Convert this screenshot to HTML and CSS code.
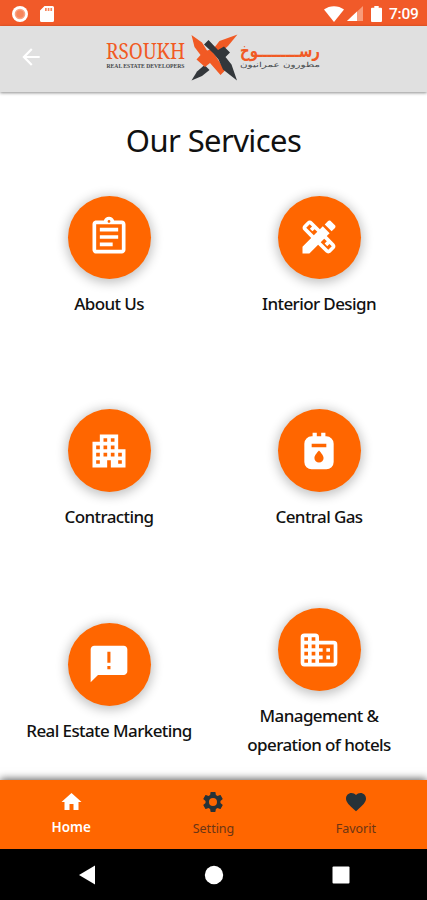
FILE: index.html
```html
<!DOCTYPE html>
<html lang="en">
<head>
  <meta charset="UTF-8" />
  <title>Our Services</title>
  <meta name="viewport" content="width=device-width, initial-scale=1.0" />
  <link rel="stylesheet" href="styles.css">
</head>
<body>

  <!-- Status bar -->
  <div class="status-bar">
    <svg class="status-record" width="16" height="16" viewBox="0 0 16 16">
      <circle cx="8" cy="8" r="8" fill="#fff"/>
      <circle cx="8" cy="8" r="5.3" fill="#f9a384"/>
      <circle cx="8" cy="8" r="3.8" fill="#f7855b"/>
    </svg>
    <svg class="status-card" width="14" height="16" viewBox="0 0 14 16">
      <path fill="#fff" d="M4.500 0H12.500a1.500 1.500 0 0 1 1.500 1.500v13a1.500 1.500 0 0 1-1.500 1.500h-11A1.500 1.500 0 0 1 0 14.500V4.500z"/>
      <path fill="#f7855b" d="M5 2h1.700v3H5zM7.700 2h1.700v3H7.700zM10.400 2h1.700v3h-1.700z"/>
    </svg>
    <svg class="status-wifi" width="20" height="16" viewBox="0 0 20 16">
      <path fill="#fff" d="M0 3.500C5.500-1 14.500-1 20 3.500L10 16z"/>
    </svg>
    <svg class="status-signal" width="16" height="15" viewBox="0 0 16 15">
      <path fill="#f89b7a" d="M16 0v15H0z"/>
      <path fill="#fff" d="M10 5.600V15H0z"/>
    </svg>
    <svg class="status-battery" width="11" height="16" viewBox="0 0 11 16">
      <path fill="#fff" d="M3.300 0h4.400v1.700H10a1 1 0 0 1 1 1V15a1 1 0 0 1-1 1H1a1 1 0 0 1-1-1V2.700a1 1 0 0 1 1-1h2.300z"/>
    </svg>
    <span class="status-time">7:09</span>
  </div>

  <!-- Header -->
  <header class="app-bar">
    <svg class="back" width="26" height="26" viewBox="0 0 24 24">
      <path fill="#fff" d="M20 11H7.830l5.590-5.590L12 4l-8 8 8 8 1.410-1.410L7.830 13H20z"/>
    </svg>
    <svg class="logo" width="220" height="50" viewBox="0 0 220 50">
      <text class="logo-name" x="1" y="26" textLength="79" lengthAdjust="spacingAndGlyphs">RSOUKH</text>
      <text class="logo-sub" x="1.500" y="35" textLength="78" lengthAdjust="spacingAndGlyphs">REAL ESTATE DEVELOPERS</text>
      <path fill="#33373b" d="M86.500 47.500L92 38.500l7.500-6.500 5 5L97 43z"/>
      <path fill="#f15a24" d="M132.500 1.500L123 13l-8 7-6-5 5.500-7z"/>
      <path fill="#f15a24" d="M86.500 2L97 9.500l5 8 4-1 5 7 9 14-4.500 4.500L105 30l-5 4-8.500-7.500 4-4.500-6-8z"/>
      <path fill="#33373b" d="M99 11.500l4.500-4.500 9.500 10 6-3.500 6 6-4.500 4.500 6 7.500 5.500 16-14-11-4.500-10-5-6-1-1z"/>
      <text class="logo-arabic" direction="rtl" x="215" y="23.500" textLength="80" lengthAdjust="spacingAndGlyphs">رســـــــــوخ</text>
      <text class="logo-arabic-sub" direction="rtl" x="215" y="34" textLength="80" lengthAdjust="spacingAndGlyphs">مطورون عمرانيون</text>
    </svg>
  </header>

  <!-- Services -->
  <main class="content">
    <h1 class="title">Our Services</h1>
    <div class="services">
      <div class="service">
        <div class="circle">
          <svg viewBox="0 0 24 24"><path d="M7 15h7v2H7zm0-4h10v2H7zm0-4h10v2H7zm12-4h-4.180C14.400 1.840 13.300 1 12 1c-1.300 0-2.400.84-2.820 2H5c-.14 0-.27.01-.4.04-.39.08-.74.28-1.010.55-.18.18-.33.4-.43.64-.1.23-.16.49-.16.77v14c0 .27.06.54.16.78s.25.45.43.64c.27.27.62.47 1.010.55.13.02.26.03.4.03h14c1.100 0 2-.9 2-2V5c0-1.100-.9-2-2-2zm-7-.25c.41 0 .75.34.75.75s-.34.75-.75.75-.75-.34-.75-.75.34-.75.75-.75zM19 19H5V5h14v14z"/></svg>
        </div>
        <p class="label">About Us</p>
      </div>
      <div class="service">
        <div class="circle">
          <svg viewBox="0 0 24 24"><path d="M16.240 11.510l1.570-1.570-3.750-3.750-1.570 1.570L8.350 3.630c-.78-.78-2.050-.78-2.830 0l-1.900 1.900c-.78.78-.78 2.050 0 2.830l4.130 4.130L3 17.250V21h3.750l4.760-4.760 4.130 4.130c.95.95 2.230.6 2.830 0l1.900-1.900c.78-.78.78-2.050 0-2.830l-4.130-4.130zm-7.060-.44L5.040 6.940l1.890-1.900L8.200 6.310 7.020 7.500l1.410 1.410 1.190-1.190 1.450 1.450-1.890 1.900zm7.880 7.890l-4.130-4.130 1.900-1.900 1.450 1.450-1.190 1.190 1.410 1.410 1.190-1.190 1.270 1.270-1.900 1.900zM20.710 7.040c.39-.39.39-1.020 0-1.410l-2.340-2.340c-.47-.47-1.120-.29-1.410 0l-1.830 1.830 3.750 3.750 1.830-1.830z"/></svg>
        </div>
        <p class="label">Interior Design</p>
      </div>
      <div class="service">
        <div class="circle">
          <svg viewBox="0 0 24 24"><path d="M17 11V3H7v4H3v14h8v-4h2v4h8V11h-4zM7 19H5v-2h2v2zm0-4H5v-2h2v2zm0-4H5V9h2v2zm4 4H9v-2h2v2zm0-4H9V9h2v2zm0-4H9V5h2v2zm4 8h-2v-2h2v2zm0-4h-2V9h2v2zm0-4h-2V5h2v2zm4 12h-2v-2h2v2zm0-4h-2v-2h2v2z"/></svg>
        </div>
        <p class="label">Contracting</p>
      </div>
      <div class="service">
        <div class="circle">
          <svg viewBox="0 0 24 24"><path fill-rule="evenodd" d="M8.500 2h2.300v2h2.400V2h2.300v2H16a4 4 0 0 1 4 4v10a4 4 0 0 1-4 4H8a4 4 0 0 1-4-4V8a4 4 0 0 1 4-4h.5zM8 8v2h8V8zM12 11.700s-2.500 2.500-2.500 4.100a2.500 2.500 0 0 0 5 0c0-1.600-2.500-4.100-2.500-4.100z"/></svg>
        </div>
        <p class="label">Central Gas</p>
      </div>
      <div class="service">
        <div class="circle">
          <svg viewBox="0 0 24 24"><path fill-rule="evenodd" d="M20 2H4c-1.100 0-1.990.9-1.990 2L2 22l4-4h14c1.100 0 2-.9 2-2V4c0-1.100-.9-2-2-2zM12.800 14.800h-1.700v-1.700h1.700zM12.800 11.300h-1.700V5.300h1.700z"/></svg>
        </div>
        <p class="label">Real Estate Marketing</p>
      </div>
      <div class="service">
        <div class="circle">
          <svg viewBox="0 0 24 24"><path fill-rule="evenodd" d="M4 3h6a2 2 0 0 1 2 2v2h8a2 2 0 0 1 2 2v10a2 2 0 0 1-2 2H4a2 2 0 0 1-2-2V5a2 2 0 0 1 2-2zM4 5v2h2V5zM4 9v2h2V9zM4 13v2h2v-2zM4 17v2h2v-2zM8 5v2h2V5zM8 9v2h2V9zM8 13v2h2v-2zM8 17v2h2v-2zM12 9v2h2v2h-2v2h2v2h-2v2h8V9zM16 11h2v2h-2zM16 15h2v2h-2z"/></svg>
        </div>
        <p class="label">Management &amp;<br>operation of hotels</p>
      </div>
    </div>
  </main>

  <!-- Bottom tabs -->
  <nav class="tabs">
    <div class="tab active">
      <svg viewBox="0 0 24 24"><path d="M10 20v-6h4v6h5v-8h3L12 3 2 12h3v8z"/></svg>
      <span>Home</span>
    </div>
    <div class="tab">
      <svg viewBox="0 0 24 24"><path d="M19.430 12.980c.04-.32.07-.64.07-.98s-.03-.66-.07-.98l2.110-1.650c.19-.15.24-.42.12-.64l-2-3.460c-.12-.22-.39-.3-.61-.22l-2.490 1c-.52-.4-1.080-.73-1.690-.98l-.38-2.650C14.460 2.180 14.250 2 14 2h-4c-.25 0-.46.18-.49.42l-.38 2.650c-.61.25-1.170.59-1.690.98l-2.490-1c-.23-.09-.49 0-.61.22l-2 3.460c-.13.22-.07.49.12.64l2.110 1.650c-.04.32-.07.65-.07.98s.03.66.07.98l-2.110 1.650c-.19.15-.24.42-.12.64l2 3.460c.12.22.39.3.61.22l2.490-1c.52.4 1.080.73 1.690.98l.38 2.650c.03.24.24.42.49.42h4c.25 0 .46-.18.49-.42l.38-2.650c.61-.25 1.170-.59 1.690-.98l2.490 1c.23.09.49 0 .61-.22l2-3.460c.12-.22.07-.49-.12-.64l-2.110-1.650zM12 16a4 4 0 1 1 0-8 4 4 0 0 1 0 8z"/></svg>
      <span>Setting</span>
    </div>
    <div class="tab">
      <svg viewBox="0 0 24 24"><path d="M12 21.350l-1.450-1.320C5.400 15.360 2 12.280 2 8.500 2 5.420 4.420 3 7.500 3c1.740 0 3.410.81 4.500 2.090C13.090 3.810 14.760 3 16.500 3 19.580 3 22 5.420 22 8.500c0 3.780-3.400 6.860-8.550 11.540L12 21.350z"/></svg>
      <span>Favorit</span>
    </div>
  </nav>

  <!-- System buttons -->
  <div class="system-nav">
    <svg width="24" height="24" viewBox="0 0 24 24"><path fill="#fff" d="M20 2.500v19L4 12z"/></svg>
    <svg width="24" height="24" viewBox="0 0 24 24"><circle fill="#fff" cx="12" cy="12" r="9.200"/></svg>
    <svg width="24" height="24" viewBox="0 0 24 24"><rect fill="#fff" x="3.500" y="3.500" width="17" height="17" rx="1"/></svg>
  </div>

</body>
</html>
```
FILE: styles.css
```css
* {
  box-sizing: border-box;
}

body {
  margin: 0;
  height: 900px;
  display: flex;
  flex-direction: column;
  overflow: hidden;
  background: #fff;
  color: #111;
  font-family: "Noto Sans", "Open Sans", sans-serif;
}

svg {
  display: block;
  flex: none;
}

.status-bar {
  flex: none;
  height: 26px;
  padding: 1px 8px 0 12px;
  display: flex;
  align-items: center;
  background: #f15a29;
}
.status-card { margin-left: 12px; }
.status-wifi { margin-left: auto; }
.status-signal { margin-left: 3px; }
.status-battery { margin-left: 8px; }
.status-time {
  margin-left: 7px;
  width: 30px;
  font: 500 15.5px/24px Roboto, sans-serif;
  letter-spacing: -0.2px;
  white-space: nowrap;
  color: #fff;
}

.app-bar {
  flex: none;
  position: relative;
  z-index: 1;
  height: 66px;
  padding-left: 18px;
  display: flex;
  align-items: center;
  background: #e0e0e0;
  box-shadow: 0 1px 3px rgba(0, 0, 0, 0.45);
}
.back { margin-bottom: 4px; }
.logo {
  margin-left: 61px;
  margin-bottom: 2px;
  overflow: visible;
}
.logo-name {
  font: 22px "Noto Serif", "Liberation Serif", serif;
  fill: #f15a24;
}
.logo-sub {
  font: bold 6.5px "Liberation Serif", serif;
  fill: #44484b;
}
.logo-arabic {
  font: bold 18px "DejaVu Sans", sans-serif;
  fill: #f15a24;
}
.logo-arabic-sub {
  font: 7px "DejaVu Sans", sans-serif;
  fill: #44484b;
}

.content {
  flex: 1;
  min-height: 0;
  overflow: hidden;
}
.title {
  margin: 0;
  padding-top: 27px;
  height: 58px;
  font-size: 31px;
  font-weight: 400;
  line-height: 42px;
  letter-spacing: -0.6px;
  text-align: center;
}

.services {
  display: grid;
  grid-template-columns: 1fr 1fr;
  grid-auto-rows: 213.5px;
  padding: 0 3px 0 4px;
}
.service {
  display: flex;
  flex-direction: column;
  justify-content: center;
  align-items: center;
}
.circle {
  width: 83px;
  height: 83px;
  border-radius: 50%;
  display: flex;
  justify-content: center;
  align-items: center;
  background: #ff6600;
  box-shadow: 0 2px 11px 2px rgba(0, 0, 0, 0.24);
}
.circle svg {
  width: 44px;
  height: 44px;
  fill: #fff;
}
.label {
  margin: 10px 0 0;
  font-size: 17px;
  font-weight: 500;
  line-height: 29px;
  letter-spacing: -0.6px;
  text-align: center;
  white-space: nowrap;
}

.tabs {
  flex: none;
  position: relative;
  z-index: 1;
  height: 69px;
  display: grid;
  grid-template-columns: repeat(3, 1fr);
  background: #ff6600;
  box-shadow: 0 -1px 8px rgba(0, 0, 0, 0.65);
}
.tab {
  padding-top: 10px;
  display: flex;
  flex-direction: column;
  align-items: center;
  gap: 5px;
  color: #6b3515;
  font-size: 12.5px;
  line-height: 20px;
}
.tab svg {
  width: 24px;
  height: 24px;
  fill: #263238;
}
.tab.active {
  color: #fff;
  font-size: 13.5px;
  font-weight: 600;
  gap: 3px;
}
.tab.active svg {
  width: 25px;
  fill: #fff;
}

.system-nav {
  flex: none;
  height: 51px;
  padding: 0 74px 0 75px;
  display: flex;
  justify-content: space-between;
  align-items: center;
  background: #000;
}
```
